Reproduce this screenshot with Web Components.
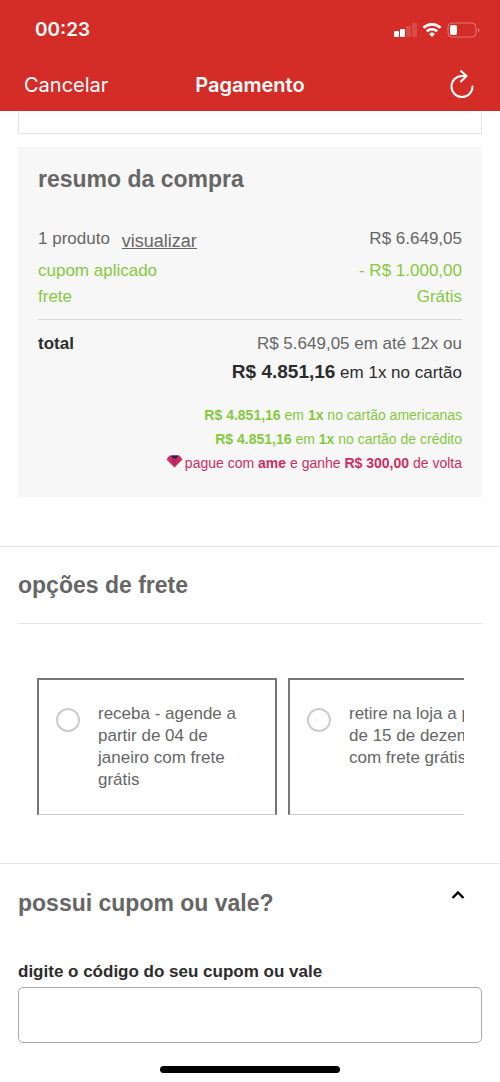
<!DOCTYPE html>
<html lang="pt-BR">
<head>
<meta charset="utf-8">
<meta name="viewport" content="width=device-width, initial-scale=1">
<title>Pagamento</title>
<style>
  body { margin: 0; background: #fff; color: #666; font: 17px/26px "Liberation Sans", Arial, sans-serif;
    --brand: #d42d28; --ok: #85c940; --ame: #cf2d61; --ink: #2c2c2c; --rule: #e6e6e6; --gutter: 18px; }
</style>
</head>
<body>
<checkout-page></checkout-page>

<script>
const define = (name, html, setup) => {
  const template = document.createElement('template');
  template.innerHTML = html;
  customElements.define(name, class extends HTMLElement {
    constructor() {
      super();
      this.attachShadow({ mode: 'open' }).append(template.content.cloneNode(true));
    }
    connectedCallback() { if (setup) setup(this, this.shadowRoot); }
  });
};

define('status-bar', `
<style>
  :host { display: flex; justify-content: space-between; align-items: center; height: 60px; padding: 0 20px 0 35px;
    font: 600 19px/24px Inter, sans-serif; }
  svg { display: block; }
</style>
<time>00:23</time>
<svg width="87" height="18" viewBox="0 0 87 18" fill="#fff" role="img" aria-label="Sinal, Wi-Fi e bateria">
  <rect x="1" y="10" width="5" height="6" rx="1"/>
  <rect x="7" y="8" width="5" height="8" rx="1"/>
  <rect x="13" y="5" width="5" height="11" rx="1" opacity=".14"/>
  <rect x="19" y="2" width="5" height="14" rx="1" opacity=".14"/>
  <g fill="none" stroke="#fff" stroke-width="2.6">
    <path d="M30.5 6.8a12.2 12.2 0 0 1 17 0"/>
    <path d="M33.8 10.3a7.6 7.6 0 0 1 10.4 0"/>
  </g>
  <path d="M39 16l-2.900-3a4.200 4.200 0 0 1 5.800 0z"/>
  <rect x="55" y="2" width="28" height="14" rx="4" fill="none" stroke="#fff" stroke-opacity=".35"/>
  <rect x="57" y="4" width="7" height="10" rx="2"/>
  <path d="M85 7v4.500a2.500 2.500 0 0 0 0-4.500" opacity=".4"/>
</svg>`);

define('nav-bar', `
<style>
  :host { display: grid; grid-template-columns: 1fr auto 1fr; align-items: center; height: 49px; padding: 0 24px 2px;
    font: 20px/24px Inter, sans-serif; }
  h1 { margin: 0; font: inherit; font-weight: 600; }
  button { all: unset; cursor: pointer; justify-self: start; }
  .reload { justify-self: end; }
  svg { display: block; }
</style>
<button type="button">Cancelar</button>
<h1>Pagamento</h1>
<button class="reload" type="button" aria-label="Recarregar">
  <svg width="28" height="30" viewBox="0 0 28 30" fill="none" stroke="#fff" stroke-width="2" stroke-linecap="round" stroke-linejoin="round">
    <path d="M24.500 16.500A10.500 10.500 0 1 1 14 6h4.500M13 1l5.500 5-5.500 5.500"/>
  </svg>
</button>`);

define('summary-row', `
<style>
  :host { display: flex; justify-content: space-between; align-items: flex-end; line-height: 26px; }
  :host([tone="ok"]) { color: var(--ok); }
</style>
<span><slot name="label"></slot></span><span><slot></slot></span>`);

define('order-summary', `
<style>
  :host { display: block; box-sizing: border-box; margin: 13px var(--gutter) 49px; padding: 19px 20px 22px; background: #f7f7f7; }
  h2 { margin: 0 0 34px; font-size: 23px; line-height: 26px; }
  .rows { display: grid; padding-bottom: 9px; border-bottom: 1px solid #d9d9d9; }
  .first { margin-bottom: 6px; }
  [slot="label"] { display: flex; align-items: flex-end; gap: 12px; }
  a { color: inherit; font-size: 18px; line-height: 22px; }
  .total { margin-top: 11px; }
  .total b, .price { color: var(--ink); }
  p { margin: 0; text-align: right; }
  .price { margin: 1px 0 16px; line-height: 28px; }
  .price b { font-size: 19px; }
  .offer { font-size: 14px; line-height: 24px; color: var(--ok); }
  .ame { color: var(--ame); }
  svg { margin-right: 2px; }
</style>
<h2>resumo da compra</h2>
<div class="rows">
  <summary-row class="first"><span slot="label"><span>1 produto</span><a href="#produtos">visualizar</a></span>R$ 6.649,05</summary-row>
  <summary-row tone="ok"><span slot="label">cupom aplicado</span>- R$ 1.000,00</summary-row>
  <summary-row tone="ok"><span slot="label">frete</span>Grátis</summary-row>
</div>
<summary-row class="total"><b slot="label">total</b>R$ 5.649,05 em até 12x ou</summary-row>
<p class="price"><b>R$ 4.851,16</b> em 1x no cartão</p>
<p class="offer"><b>R$ 4.851,16</b> em <b>1x</b> no cartão americanas</p>
<p class="offer"><b>R$ 4.851,16</b> em <b>1x</b> no cartão de crédito</p>
<p class="offer ame"><svg width="17" height="13" viewBox="0 0 17 13" aria-hidden="true"><path fill="#cf2d61" d="M3.500.5h10L16.500 4.500 8.500 12.500.5 4.500z"/><path fill="#b32a5c" d="M5.500 4h6l-3 8.500z"/><path fill="#271b58" d="M5 .5h7.500L10.500 3.500H7z"/></svg>pague com <b>ame</b> e ganhe <b>R$ 300,00</b> de volta</p>`);

define('freight-option', `
<style>
  :host { display: block; flex: 0 0 240px; box-sizing: border-box; border: 2px solid #777; border-bottom: 1px solid #ccc; }
  label { display: flex; gap: 18px; padding: 23px 19px 23px 17px; line-height: 22px; cursor: pointer; }
  input { appearance: none; flex: none; box-sizing: border-box; width: 24px; height: 24px; margin: 5px 0 0; border: 2px solid #ccc; border-radius: 50%; background: #fff; }
  input:checked { border: 7px solid var(--brand); }
</style>
<label><input type="radio" name="frete"><span><slot></slot></span></label>`,
(host, root) => {
  const input = root.querySelector('input');
  input.addEventListener('change', () => {
    for (const other of host.parentNode.querySelectorAll('freight-option'))
      if (other !== host) other.shadowRoot.querySelector('input').checked = false;
  });
});

define('freight-options', `
<style>
  :host { display: block; padding: 0 var(--gutter) 48px; border-top: 1px solid var(--rule); }
  h2 { margin: 0 0 54px; padding: 25px 0; border-bottom: 1px solid var(--rule); font-size: 23px; line-height: 26px; }
  .track { display: flex; gap: 11px; margin: 0 18px 0 19px; overflow-x: auto; scrollbar-width: none; }
</style>
<h2>opções de frete</h2>
<div class="track" role="group" aria-label="opções de frete">
  <freight-option>receba - agende a partir de 04 de janeiro com frete grátis</freight-option>
  <freight-option>retire na loja a partir de 15 de dezembro com frete grátis</freight-option>
</div>`);

define('coupon-form', `
<style>
  :host { display: block; padding: 26px var(--gutter) 0; border-top: 1px solid var(--rule); }
  h2 { display: flex; justify-content: space-between; align-items: flex-start; margin: 0 0 43px; font-size: 23px; line-height: 26px; }
  button { all: unset; display: block; padding: 0 17px; cursor: pointer; }
  svg { display: block; }
  label { display: block; margin-bottom: 2px; color: var(--ink); font-weight: bold; }
  input { display: block; box-sizing: border-box; width: 100%; height: 56px; padding: 0 16px; border: 1px solid #aaa; border-radius: 5px; background: #fff; font: inherit; }
</style>
<h2>possui cupom ou vale?
  <button type="button" aria-label="Recolher"><svg width="14" height="10" viewBox="0 0 14 10" fill="none" stroke="#000" stroke-width="2.400"><path d="M1.500 8L7 2.500 12.500 8"/></svg></button>
</h2>
<label for="codigo">digite o código do seu cupom ou vale</label>
<input id="codigo" type="text" autocomplete="off">`);

define('checkout-page', `
<style>
  :host { display: block; }
  header { background: var(--brand); color: #fff; }
  .previous { height: 22px; margin: 0 var(--gutter); border: 1px solid var(--rule); border-top: 0; }
  .home { width: 36%; height: 7px; margin: 23px auto 9px; border-radius: 4px; background: #000; }
</style>
<header><status-bar></status-bar><nav-bar></nav-bar></header>
<main>
  <div class="previous"></div>
  <order-summary></order-summary>
  <freight-options></freight-options>
  <coupon-form></coupon-form>
</main>
<div class="home"></div>`);
</script>
</body>
</html>
